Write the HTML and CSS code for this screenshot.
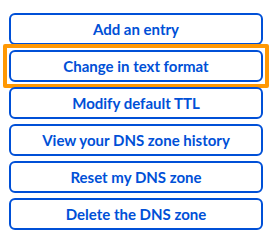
FILE: index.html
```html
<!DOCTYPE html>
<html lang="en">
<head>
    <meta charset="UTF-8">
    <title>DNS zone actions</title>
    <link rel="stylesheet" href="styles.css">
</head>
<body>
    <div class="actions">
        <button class="action-btn">Add an entry</button>
        <button class="action-btn focused">Change in text format</button>
        <button class="action-btn">Modify default TTL</button>
        <button class="action-btn">View your DNS zone history</button>
        <button class="action-btn">Reset my DNS zone</button>
        <button class="action-btn">Delete the DNS zone</button>
    </div>
</body>
</html>
```

FILE: styles.css
```css
body {
    margin: 0;
    background: #fff;
    font-family: Lato, 'Liberation Sans', sans-serif;
}

.actions {
    display: flex;
    flex-direction: column;
    gap: 5px;
    padding: 13px 9px;
}

.action-btn {
    position: relative;
    height: 32px;
    width: 100%;
    border: 2px solid #0050d7;
    border-radius: 6px;
    background: #fff;
    color: #0050d7;
    font-family: inherit;
    font-size: 15px;
    font-weight: 700;
    cursor: pointer;
}

/* focus ring drawn square, like the original */
.action-btn.focused::after {
    content: '';
    position: absolute;
    top: -8px;
    left: -8px;
    right: -8px;
    bottom: -8px;
    border: 4px solid #ff9803;
    border-radius: 2px;
}
```
